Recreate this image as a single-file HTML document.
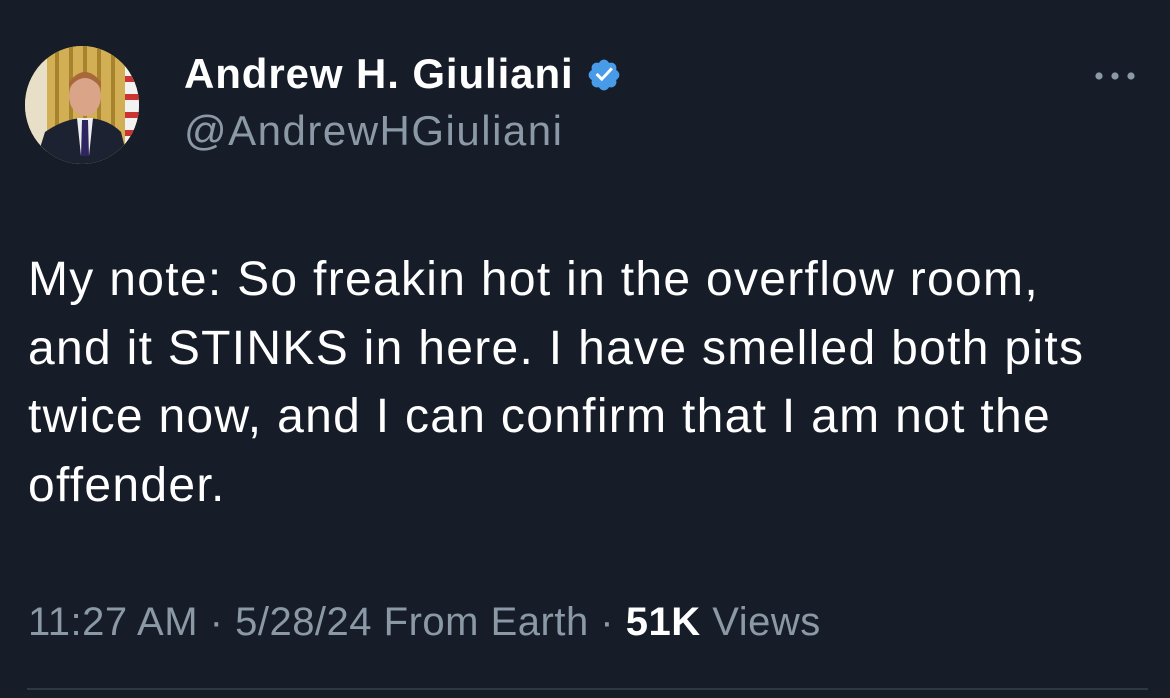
<!DOCTYPE html>
<html><head><meta charset="utf-8"><style>
html,body{margin:0;padding:0;background:#161d28;width:1170px;height:698px;overflow:hidden;font-family:"Liberation Sans",Arial,sans-serif}
.av{position:absolute;left:25px;top:46px;width:114px;height:118px;border-radius:50%;overflow:hidden;background:#c9a447}
.name{position:absolute;left:184px;top:50px;font-size:42px;font-weight:bold;color:#fff;letter-spacing:0.9px;white-space:nowrap}
.handle{position:absolute;left:184px;top:107px;font-size:42px;color:#8b98a5;letter-spacing:1.5px;white-space:nowrap}
.dots{position:absolute;left:1094px;top:70px}
.text{position:absolute;left:28px;top:246px;font-size:48px;line-height:68.5px;color:#fff;letter-spacing:1.3px;white-space:nowrap}
.foot{position:absolute;left:28px;top:600px;font-size:40px;color:#8b98a5;letter-spacing:0.5px;white-space:nowrap}
.foot b{color:#fff}
.div{position:absolute;left:27px;top:688px;width:1121px;height:2px;background:#2f3842}
</style></head><body>
<div class="av"><svg width="114" height="118" viewBox="0 0 114 118">
<rect width="114" height="118" fill="#d2ae55"/>
<g fill="#a8832e"><rect x="30" y="0" width="4" height="90"/><rect x="44" y="0" width="4" height="80"/><rect x="58" y="0" width="4" height="80"/><rect x="72" y="0" width="4" height="90"/><rect x="86" y="0" width="4" height="90"/></g>
<rect x="0" y="0" width="22" height="118" fill="#e8dfc8"/>
<rect x="100" y="15" width="14" height="90" fill="#f2f2f2"/>
<g fill="#c33"><rect x="100" y="30" width="14" height="6"/><rect x="100" y="48" width="14" height="6"/><rect x="100" y="66" width="14" height="6"/><rect x="100" y="84" width="14" height="6"/></g>
<ellipse cx="60" cy="50" rx="16" ry="20" fill="#d9a487"/>
<path d="M44 42 Q60 22 76 42 L76 36 Q60 16 44 36Z" fill="#a8683a"/>
<path d="M10 118 L20 86 Q40 72 60 72 Q82 72 96 86 L104 118Z" fill="#1d2233"/>
<path d="M52 72 L68 72 L64 110 L56 110Z" fill="#eee"/>
<path d="M57 74 L63 74 L64 110 L56 110Z" fill="#2e2560"/>
</svg></div>
<div class="name">Andrew H. Giuliani <svg style="vertical-align:-5px" width="36" height="36" viewBox="0 0 24 24"><path fill="#489be9" d="M22.25 12c0-1.43-.88-2.67-2.19-3.34.46-1.39.2-2.9-.81-3.91s-2.52-1.27-3.91-.81c-.66-1.31-1.91-2.19-3.34-2.19s-2.67.88-3.33 2.19c-1.4-.46-2.91-.2-3.92.81s-1.26 2.52-.8 3.91C2.63 9.33 1.75 10.57 1.75 12s.88 2.67 2.19 3.34c-.46 1.39-.2 2.9.8 3.91s2.52 1.26 3.91.81c.67 1.31 1.91 2.19 3.34 2.19s2.68-.88 3.34-2.19c1.39.45 2.9.2 3.91-.81s1.27-2.52.81-3.91c1.31-.67 2.19-1.91 2.19-3.34z"/><path fill="#fff" d="M10.54 16.2l-4.2-4.2 1.42-1.41 2.78 2.79 5.96-6.5 1.48 1.35z"/></svg></div>
<div class="handle">@AndrewHGiuliani</div>
<svg class="dots" width="44" height="12" viewBox="0 0 44 12"><g fill="#8b98a5"><circle cx="5" cy="6" r="3.6"/><circle cx="21" cy="6" r="3.6"/><circle cx="37" cy="6" r="3.6"/></g></svg>
<div class="text">My note: So freakin hot in the overflow room,<br>and it STINKS in here. I have smelled both pits<br>twice now, and I can confirm that I am not the<br>offender.</div>
<div class="foot">11:27 AM · 5/28/24 From Earth · <b>51K</b> Views</div>
<div class="div"></div>
</body></html>
